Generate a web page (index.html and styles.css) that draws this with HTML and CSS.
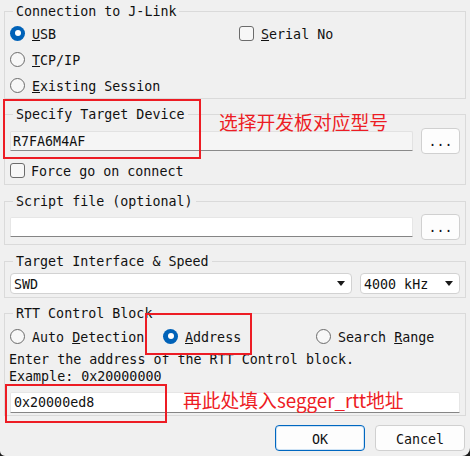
FILE: index.html
```html
<!DOCTYPE html>
<html>
<head>
<meta charset="utf-8">
<link rel="stylesheet" href="styles.css">
</head>
<body>
<div class="dialog">
  <fieldset class="group g-conn">
    <legend>Connection to J-Link</legend>
    <div class="conn-grid">
      <div class="opt"><span class="radio on"></span><span class="lbl"><u>U</u>SB</span></div>
      <div class="opt"><span class="check"></span><span class="lbl"><u>S</u>erial No</span></div>
      <div class="opt"><span class="radio"></span><span class="lbl"><u>T</u>CP/IP</span></div>
      <div></div>
      <div class="opt"><span class="radio"></span><span class="lbl"><u>E</u>xisting Session</span></div>
    </div>
  </fieldset>

  <fieldset class="group g-dev">
    <legend>Specify Target Device</legend>
    <div class="field-row">
      <div class="textbox readonly">R7FA6M4AF</div>
      <div class="btn-dots">...</div>
    </div>
    <div class="opt force"><span class="check"></span><span class="lbl">Force go on connect</span></div>
  </fieldset>

  <fieldset class="group g-script">
    <legend>Script file (optional)</legend>
    <div class="field-row">
      <div class="textbox"></div>
      <div class="btn-dots">...</div>
    </div>
  </fieldset>

  <fieldset class="group g-if">
    <legend>Target Interface &amp; Speed</legend>
    <div class="sel-row">
      <div class="select sel-if"><span class="lbl">SWD</span><span class="arrow"></span></div>
      <div class="select sel-speed"><span class="lbl">4000 kHz</span><span class="arrow"></span></div>
    </div>
  </fieldset>

  <fieldset class="group g-rtt">
    <legend>RTT Control Block</legend>
    <div class="rtt-grid">
      <div class="opt"><span class="radio"></span><span class="lbl">Auto <u>D</u>etection</span></div>
      <div class="opt"><span class="radio on"></span><span class="lbl"><u>A</u>ddress</span></div>
      <div class="opt"><span class="radio"></span><span class="lbl">Search <u>R</u>ange</span></div>
    </div>
    <div class="hint">Enter the address of the RTT Control block.<br>Example: 0x20000000</div>
    <div class="textbox addr">0x20000ed8</div>
  </fieldset>

  <div class="buttons">
    <div class="btn default"><span class="lbl">OK</span></div>
    <div class="btn"><span class="lbl">Cancel</span></div>
  </div>

  <div class="mark box1"></div>
  <div class="note note1">选择开发板对应型号</div>
  <div class="mark box2"></div>
  <div class="mark box3"></div>
  <div class="note note2">再此处填入segger_rtt地址</div>
</div>
</body>
</html>
```

FILE: styles.css
```css
html, body {
  margin: 0;
  padding: 0;
  background: #1c1c1c;
}

.dialog {
  position: relative;
  width: 470px;
  height: 456px;
  box-sizing: border-box;
  padding: 2px 4px 0 4px;
  background: #f0f0f0;
  border-radius: 0 0 8px 5px;
  font-family: "DejaVu Sans Mono", "Liberation Mono", monospace;
  font-size: 13.33px;
  line-height: 16px;
  color: #111;
  overflow: hidden;
}

.group {
  margin: 0;
  padding: 0 5px;
  border: 1px solid #dadada;
  min-width: 0;
}

.group legend {
  margin-left: 3px;
  padding: 2px 3px 0;
  line-height: 16px;
}

.g-conn { padding-top: 0; padding-bottom: 0; }
.g-dev { margin-top: 6px; padding-top: 5px; padding-bottom: 4px; }
.g-script { margin-top: 7px; padding-top: 4px; padding-bottom: 4px; }
.g-if { margin-top: 7px; padding-top: 3px; padding-bottom: 3px; }
.g-rtt { margin-top: 6px; padding-top: 4px; padding-bottom: 2px; }

.conn-grid {
  display: grid;
  grid-template-columns: 229px 1fr;
  grid-auto-rows: 26px;
}

.opt {
  display: flex;
  align-items: center;
  gap: 7px;
  white-space: nowrap;
}

.lbl {
  padding-top: 3px;
}

.radio {
  width: 15px;
  height: 15px;
  box-sizing: border-box;
  border-radius: 50%;
  border: 1px solid #6b6b6b;
  background: #f7f7f7;
  flex: none;
}

.radio.on {
  border: none;
  background: #0062b8;
  display: flex;
  align-items: center;
  justify-content: center;
}

.radio.on::after {
  content: "";
  width: 6px;
  height: 6px;
  border-radius: 50%;
  background: #fff;
}

.check {
  width: 15px;
  height: 15px;
  box-sizing: border-box;
  border: 1px solid #6b6b6b;
  border-radius: 3px;
  background: #f7f7f7;
  flex: none;
}

.opt u {
  text-decoration: underline;
  text-underline-offset: 1px;
}

.field-row {
  display: flex;
  align-items: center;
  gap: 8px;
  height: 26px;
}

.textbox {
  flex: 1;
  height: 20px;
  box-sizing: border-box;
  background: #fff;
  border: 1px solid #e6e6e6;
  border-bottom: 1px solid #858585;
  border-radius: 2px 2px 0 0;
  padding: 1px 2px 0;
  line-height: 17px;
}

.textbox.readonly {
  background: #f5f5f5;
  border-color: #e2e2e2;
  border-bottom-color: #8a8a8a;
}

.btn-dots {
  width: 39px;
  height: 26px;
  box-sizing: border-box;
  flex: none;
  background: #fdfdfd;
  border: 1px solid #d0d0d0;
  border-radius: 4px;
  display: flex;
  align-items: center;
  justify-content: center;
  line-height: 16px;
  padding-top: 2px;
}

.force {
  margin-top: 6px;
  height: 20px;
  gap: 6px;
}

.sel-row {
  display: flex;
  gap: 8px;
}

.select {
  height: 21px;
  box-sizing: border-box;
  background: #fff;
  border: 1px solid #d2d2d2;
  border-radius: 4px;
  display: flex;
  align-items: center;
  justify-content: space-between;
  padding: 0 6px 0 3px;
}

.select .lbl { padding-top: 2px; }

.sel-if { width: 342px; }
.sel-speed { width: 100px; }

.arrow {
  width: 0;
  height: 0;
  border-left: 4px solid transparent;
  border-right: 4px solid transparent;
  border-top: 5px solid #1a1a1a;
}

.rtt-grid {
  display: grid;
  grid-template-columns: 153px 153px 1fr;
  height: 20px;
  align-items: center;
}

.hint {
  margin-top: 5px;
  margin-left: -1px;
  line-height: 17px;
  white-space: nowrap;
}

.textbox.addr {
  margin-top: 7px;
  height: 21px;
  padding-left: 3px;
}

.buttons {
  display: flex;
  justify-content: flex-end;
  gap: 10px;
  margin-top: 9px;
  margin-right: 1px;
}

.btn {
  width: 90px;
  height: 26px;
  box-sizing: border-box;
  background: #fdfdfd;
  border: 1px solid #d0d0d0;
  border-radius: 4px;
  display: flex;
  align-items: center;
  justify-content: center;
}

.btn.default {
  border: 1px solid #0067c0;
  box-shadow: inset 0 0 0 1px #cfe3f5;
}

.mark {
  position: absolute;
  box-sizing: border-box;
  border: 2px solid #ed1c24;
}

.box1 { left: 3px; top: 99px; width: 198px; height: 60px; }
.box2 { left: 145px; top: 313px; width: 107px; height: 42px; }
.box3 { left: 5px; top: 384px; width: 162px; height: 39px; }

.note {
  position: absolute;
  font-family: "Noto Sans CJK SC", "Noto Sans", sans-serif;
  font-size: 18.8px;
  line-height: 26px;
  color: #ed1c24;
  white-space: nowrap;
}

.note1 { left: 219px; top: 109px; }
.note2 { left: 183px; top: 387px; }
```
